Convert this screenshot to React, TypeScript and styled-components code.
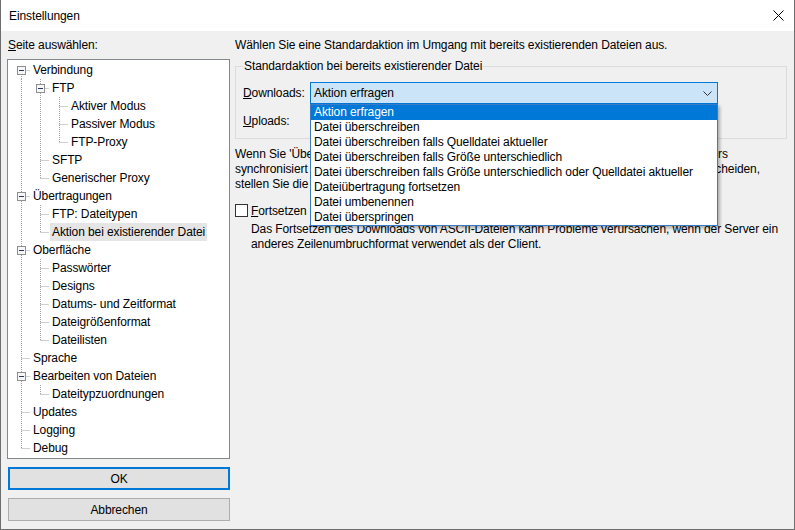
import React from 'react';
import styled, { createGlobalStyle } from 'styled-components';

const GlobalStyle = createGlobalStyle`
  html, body {
    margin: 0;
    padding: 0;
    background: #fff;
  }
  body {
    font-family: "Liberation Sans", Arial, sans-serif;
    font-size: 12px;
    letter-spacing: -0.1px;
    color: #000;
  }
`;

const Window = styled.div`
  width: 795px;
  height: 530px;
  box-sizing: border-box;
  border: 1px solid #6e6e6e;
  border-top: none;
  background: #f0f0f0;
  display: flex;
  flex-direction: column;
`;

const TitleBar = styled.div`
  height: 31px;
  flex: none;
  background: #fff;
  display: flex;
  align-items: center;
  justify-content: space-between;
  padding-left: 8px;
  padding-right: 10px;
`;

const Title = styled.span`
  font-size: 12px;
`;

const Body = styled.div`
  flex: 1;
  display: flex;
  padding: 0 7px 0 6px;
`;

const LeftColumn = styled.div`
  width: 223px;
  flex: none;
  display: flex;
  flex-direction: column;
`;

const Caption = styled.div`
  padding-top: 7px;
  line-height: 15px;
  padding-left: 1px;
`;

const TreeBox = styled.div`
  margin-top: 6px;
  height: 400px;
  box-sizing: border-box;
  border: 1px solid #828790;
  background: #fff;
  padding-top: 1px;
`;

const Row = styled.div`
  height: 18px;
  display: flex;
  align-items: stretch;
`;

const RowLabel = styled.span<{ $selected?: boolean }>`
  display: flex;
  align-items: center;
  padding: 0 2px;
  white-space: nowrap;
  background: ${(p) => (p.$selected ? '#e5e5e5' : 'transparent')};
`;

const Button = styled.div<{ $default?: boolean }>`
  height: 23px;
  box-sizing: border-box;
  margin-left: 1px;
  display: flex;
  align-items: center;
  justify-content: center;
  background: #e1e1e1;
  border: ${(p) => (p.$default ? '2px solid #0078d7' : '1px solid #adadad')};
`;

const ButtonStack = styled.div`
  margin-top: 8px;
  display: flex;
  flex-direction: column;
  gap: 8px;
`;

const RightColumn = styled.div`
  flex: 1;
  margin-left: 5px;
  display: flex;
  flex-direction: column;
`;

const Heading = styled.div`
  padding-top: 7px;
  line-height: 15px;
`;

const GroupBox = styled.fieldset`
  margin: 6px 0 0 0;
  padding: 8px 7px 6px 7px;
  border: 1px solid #dcdcdc;
  display: flex;
  flex-direction: column;
  gap: 6px;
`;

const Legend = styled.legend`
  padding: 0 1px;
  line-height: 15px;
`;

const FieldRow = styled.div`
  display: flex;
  align-items: center;
  height: 22px;
`;

const FieldLabel = styled.span`
  width: 67px;
  flex: none;
`;

const ComboWrap = styled.div`
  position: relative;
  width: 408px;
  height: 22px;
`;

const Combo = styled.div<{ $active?: boolean }>`
  height: 22px;
  box-sizing: border-box;
  display: flex;
  align-items: center;
  justify-content: space-between;
  padding: 0 5px 0 3px;
  border: 1px solid ${(p) => (p.$active ? '#0078d7' : '#adadad')};
  background: ${(p) => (p.$active ? '#cce4f7' : '#e1e1e1')};
`;

const DropList = styled.div`
  position: absolute;
  top: 100%;
  left: 0;
  right: 0;
  z-index: 2;
  background: #fff;
  border: 1px solid #3a7bc4;
  box-shadow: 2px 2px 3px rgba(0, 0, 0, 0.28);
`;

const DropItem = styled.div<{ $selected?: boolean }>`
  height: 15px;
  line-height: 15px;
  padding-left: 3px;
  white-space: nowrap;
  background: ${(p) => (p.$selected ? '#0078d7' : '#fff')};
  color: ${(p) => (p.$selected ? '#fff' : '#000')};
`;

const Paragraph = styled.div`
  margin-top: 8px;
  line-height: 15px;
  white-space: nowrap;
`;

const CheckRow = styled.div`
  margin-top: 11px;
  display: flex;
  align-items: center;
  height: 15px;
`;

const CheckBox = styled.span`
  width: 13px;
  height: 13px;
  box-sizing: border-box;
  border: 1px solid #333;
  background: #fff;
  margin-right: 3px;
`;

const Note = styled.div`
  margin-top: 4px;
  padding-left: 16px;
  line-height: 15px;
  white-space: nowrap;
`;

const U = styled.span`
  text-decoration: underline;
`;

type TreeItem = { label: string; selected?: boolean; children?: TreeItem[] };

type FlatRow = {
  label: string;
  selected?: boolean;
  depth: number;
  last: boolean;
  first: boolean;
  hasChildren: boolean;
  guides: boolean[];
};

const tree: TreeItem[] = [
  {
    label: 'Verbindung',
    children: [
      {
        label: 'FTP',
        children: [{ label: 'Aktiver Modus' }, { label: 'Passiver Modus' }, { label: 'FTP-Proxy' }],
      },
      { label: 'SFTP' },
      { label: 'Generischer Proxy' },
    ],
  },
  {
    label: 'Übertragungen',
    children: [{ label: 'FTP: Dateitypen' }, { label: 'Aktion bei existierender Datei', selected: true }],
  },
  {
    label: 'Oberfläche',
    children: [
      { label: 'Passwörter' },
      { label: 'Designs' },
      { label: 'Datums- und Zeitformat' },
      { label: 'Dateigrößenformat' },
      { label: 'Dateilisten' },
    ],
  },
  { label: 'Sprache' },
  { label: 'Bearbeiten von Dateien', children: [{ label: 'Dateitypzuordnungen' }] },
  { label: 'Updates' },
  { label: 'Logging' },
  { label: 'Debug' },
];

const flatten = (items: TreeItem[], depth: number, guides: boolean[], out: FlatRow[]) => {
  items.forEach((item, i) => {
    const last = i === items.length - 1;
    out.push({
      label: item.label,
      selected: item.selected,
      depth,
      last,
      first: depth === 0 && i === 0,
      hasChildren: !!item.children,
      guides,
    });
    if (item.children) flatten(item.children, depth + 1, [...guides, !last], out);
  });
  return out;
};

const rows = flatten(tree, 0, [], []);

const lineX = (d: number) => 13.5 + 19 * d;
const DOT = '#a0a0a0';

const Guides = ({ row }: { row: FlatRow }) => {
  const w = 23 + 19 * row.depth;
  const x = lineX(row.depth);
  return (
    <svg width={w} height={18} style={{ flex: 'none' }}>
      {row.guides.map((on, a) =>
        on ? <line key={a} x1={lineX(a)} y1={0} x2={lineX(a)} y2={18} stroke={DOT} strokeDasharray="1 1" /> : null
      )}
      <line x1={x} y1={row.first ? 9 : 0} x2={x} y2={row.last ? 10 : 18} stroke={DOT} strokeDasharray="1 1" />
      <line x1={x} y1={9.5} x2={w - 1} y2={9.5} stroke={DOT} strokeDasharray="1 1" />
      {row.hasChildren && (
        <g>
          <rect x={x - 4} y={5.5} width={8} height={8} fill="#f6f6f6" stroke="#8e8f8f" />
          <line x1={x - 2.5} y1={9.5} x2={x + 2.5} y2={9.5} stroke="#23395f" />
        </g>
      )}
    </svg>
  );
};

const Chevron = () => (
  <svg width="9" height="5" viewBox="0 0 9 5">
    <path d="M0.5 0.5 L4.5 4.5 L8.5 0.5" fill="none" stroke="#333" strokeWidth="1" />
  </svg>
);

const CloseIcon = () => (
  <svg width="11" height="11" viewBox="0 0 11 11">
    <path d="M0.5 0.5 L10.5 10.5 M10.5 0.5 L0.5 10.5" stroke="#000" strokeWidth="1" />
  </svg>
);

const actions = [
  'Aktion erfragen',
  'Datei überschreiben',
  'Datei überschreiben falls Quelldatei aktueller',
  'Datei überschreiben falls Größe unterschiedlich',
  'Datei überschreiben falls Größe unterschiedlich oder Quelldatei aktueller',
  'Dateiübertragung fortsetzen',
  'Datei umbenennen',
  'Datei überspringen',
];

export default function App() {
  return (
    <>
      <GlobalStyle />
      <Window>
        <TitleBar>
          <Title>Einstellungen</Title>
          <CloseIcon />
        </TitleBar>
        <Body>
          <LeftColumn>
            <Caption>
              <U>S</U>eite auswählen:
            </Caption>
            <TreeBox>
              {rows.map((r, i) => (
                <Row key={i}>
                  <Guides row={r} />
                  <RowLabel $selected={r.selected}>{r.label}</RowLabel>
                </Row>
              ))}
            </TreeBox>
            <ButtonStack>
              <Button $default>OK</Button>
              <Button>Abbrechen</Button>
            </ButtonStack>
          </LeftColumn>
          <RightColumn>
            <Heading>Wählen Sie eine Standardaktion im Umgang mit bereits existierenden Dateien aus.</Heading>
            <GroupBox>
              <Legend>Standardaktion bei bereits existierender Datei</Legend>
              <FieldRow>
                <FieldLabel>
                  <U>D</U>ownloads:
                </FieldLabel>
                <ComboWrap>
                  <Combo $active>
                    <span>Aktion erfragen</span>
                    <Chevron />
                  </Combo>
                  <DropList>
                    {actions.map((a, i) => (
                      <DropItem key={a} $selected={i === 0}>
                        {a}
                      </DropItem>
                    ))}
                  </DropList>
                </ComboWrap>
              </FieldRow>
              <FieldRow>
                <FieldLabel>
                  <U>U</U>ploads:
                </FieldLabel>
                <ComboWrap>
                  <Combo>
                    <span>Aktion erfragen</span>
                    <Chevron />
                  </Combo>
                </ComboWrap>
              </FieldRow>
            </GroupBox>
            <Paragraph>
              Wenn Sie 'Überschreiben falls Quelldatei aktueller' verwenden, müssen die Uhren des Servers
              <br />
              synchronisiert sein. Falls sich die Zeitzonen des Servers und des lokalen FTP-Clients unterscheiden,
              <br />
              stellen Sie die Zeitzonenverschiebung im Servermanager ein.
            </Paragraph>
            <CheckRow>
              <CheckBox />
              <span>
                <U>F</U>ortsetzen von ASCII-Dateien erlauben
              </span>
            </CheckRow>
            <Note>
              Das Fortsetzen des Downloads von ASCII-Dateien kann Probleme verursachen, wenn der Server ein
              <br />
              anderes Zeilenumbruchformat verwendet als der Client.
            </Note>
          </RightColumn>
        </Body>
      </Window>
    </>
  );
}
